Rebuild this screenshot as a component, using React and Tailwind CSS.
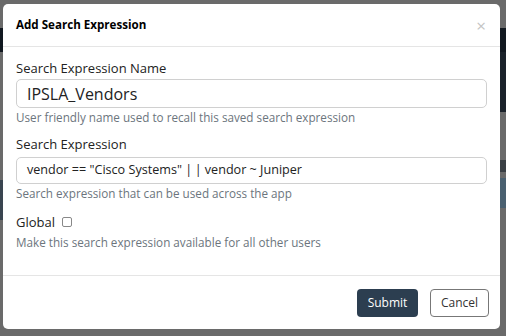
export default function App() {
  return (
    <div className="relative w-[506px] h-[336px] overflow-hidden bg-[#6a6a6a]" style={{ fontFamily: '"Open Sans", "Noto Sans", sans-serif' }}>
      <div className="absolute left-0 right-0 top-[28px] h-[24px] bg-[#111820]" />
      <div className="absolute right-0 top-[52px] w-[6px] h-[60px] bg-[#1a222a]" />
      <div className="absolute right-0 top-[160px] w-[6px] h-[12px] bg-[#3a3f44]" />
      <div className="absolute right-0 top-[178px] w-[6px] h-[30px] bg-[#4a6070]" />
      <div className="absolute left-0 top-[180px] w-[3px] h-[40px] bg-[#3a4550]" />
      <div className="relative ml-[3px] mt-[4px] w-[497px] h-[325px] bg-white rounded-[5px] flex flex-col text-[#212529]">
        <div className="h-[43px] flex items-center justify-between px-[13px] border-b border-[#e5e5e5] shrink-0">
          <div className="text-[11.6px] font-bold text-black">Add Search Expression</div>
          <div className="text-[17px] leading-none text-[#c4c4c4] mr-[1px]">×</div>
        </div>
        <div className="flex-1 px-[13px] pt-[12px] flex flex-col">
          <label className="text-[13px] leading-[18px] text-[#222]">Search Expression Name</label>
          <div className="mt-[2px] h-[29px] border border-[#d0d0d0] rounded-[5px] flex items-center px-[10px] text-[16px] text-[#222]">IPSLA_Vendors</div>
          <div className="text-[11.7px] leading-[18px] text-[#6c757d]">User friendly name used to recall this saved search expression</div>
          <label className="mt-[9px] text-[13px] leading-[18px] text-[#222]">Search Expression</label>
          <div className="mt-[4px] h-[27px] border border-[#d0d0d0] rounded-[5px] flex items-center px-[10px] text-[12.6px] text-[#222]">
            <span className="whitespace-pre">{'vendor == "Cisco Systems" '}<span className="tracking-[2.5px]">|</span>{'| vendor ~ Juniper'}</span>
          </div>
          <div className="text-[11.7px] leading-[18px] text-[#6c757d]">Search expression that can be used across the app</div>
          <div className="mt-[11px] flex items-center gap-[7px] text-[13px] leading-[18px] text-[#222]">
            <span>Global</span>
            <span className="w-[10px] h-[10px] border border-[#888] rounded-[2px] bg-white" />
          </div>
          <div className="mt-[2px] text-[11.7px] leading-[18px] text-[#6c757d]">Make this search expression available for all other users</div>
        </div>
        <div className="h-[54px] border-t border-[#e5e5e5] flex items-center justify-end gap-[12px] pr-[11px] shrink-0">
          <div className="w-[61px] h-[28px] rounded-[4px] bg-[#2c3e50] text-white text-[12px] flex items-center justify-center">Submit</div>
          <div className="w-[59px] h-[28px] rounded-[4px] border border-[#777] text-[#333] text-[12px] flex items-center justify-center">Cancel</div>
        </div>
      </div>
    </div>
  );
}
